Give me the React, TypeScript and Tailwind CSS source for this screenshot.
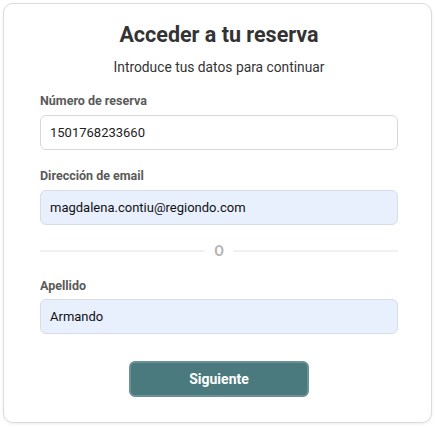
export default function App() {
  return (
    <div className="w-[436px] h-[427px] bg-white p-[3px] font-['Roboto',sans-serif]">
      <div className="h-[420px] w-[429px] rounded-[10px] border border-[#dcdcdc] bg-white shadow-[0_1px_3px_rgba(0,0,0,0.08)] pl-[36px] pr-[33px] pt-[18px]">
        <h1 className="text-center text-[21.5px] font-bold leading-[26px] text-[#333]">Acceder a tu reserva</h1>
        <p className="mt-[10px] text-center text-[13.8px] leading-[18px] text-[#333]">Introduce tus datos para continuar</p>

        <label className="mt-[17px] block text-[12.5px] font-bold leading-[16px] text-[#5a5a5a]">Número de reserva</label>
        <div className="mt-[6px] flex h-[35px] items-center rounded-[6px] border border-[#d8d8d8] bg-white px-[9px] text-[13px] text-[#222]">1501768233660</div>

        <label className="mt-[18px] block text-[12.5px] font-bold leading-[16px] text-[#5a5a5a]">Dirección de email</label>
        <div className="mt-[6px] flex h-[35px] items-center rounded-[6px] border border-[#d8dce6] bg-[#e8f0fe] px-[9px] text-[13px] text-[#111]">magdalena.contiu@regiondo.com</div>

        <div className="mt-[18px] flex h-[16px] items-center gap-[9px]">
          <div className="h-[2px] flex-1 bg-[#eef1f5]" />
          <span className="text-[14px] font-bold leading-[16px] text-[#b6b6b6]">O</span>
          <div className="h-[2px] flex-1 bg-[#eef1f5]" />
        </div>

        <label className="mt-[19px] block text-[12.5px] font-bold leading-[16px] text-[#5a5a5a]">Apellido</label>
        <div className="mt-[5px] flex h-[35px] items-center rounded-[6px] border border-[#d8dce6] bg-[#e8f0fe] px-[9px] text-[13px] text-[#111]">Armando</div>

        <div className="mt-[27px] flex justify-center">
          <button className="h-[36px] w-[180px] rounded-[6px] border-2 border-[#6a9296] bg-[#4b7a7e] text-[14px] font-bold text-white">Siguiente</button>
        </div>
      </div>
    </div>
  );
}
